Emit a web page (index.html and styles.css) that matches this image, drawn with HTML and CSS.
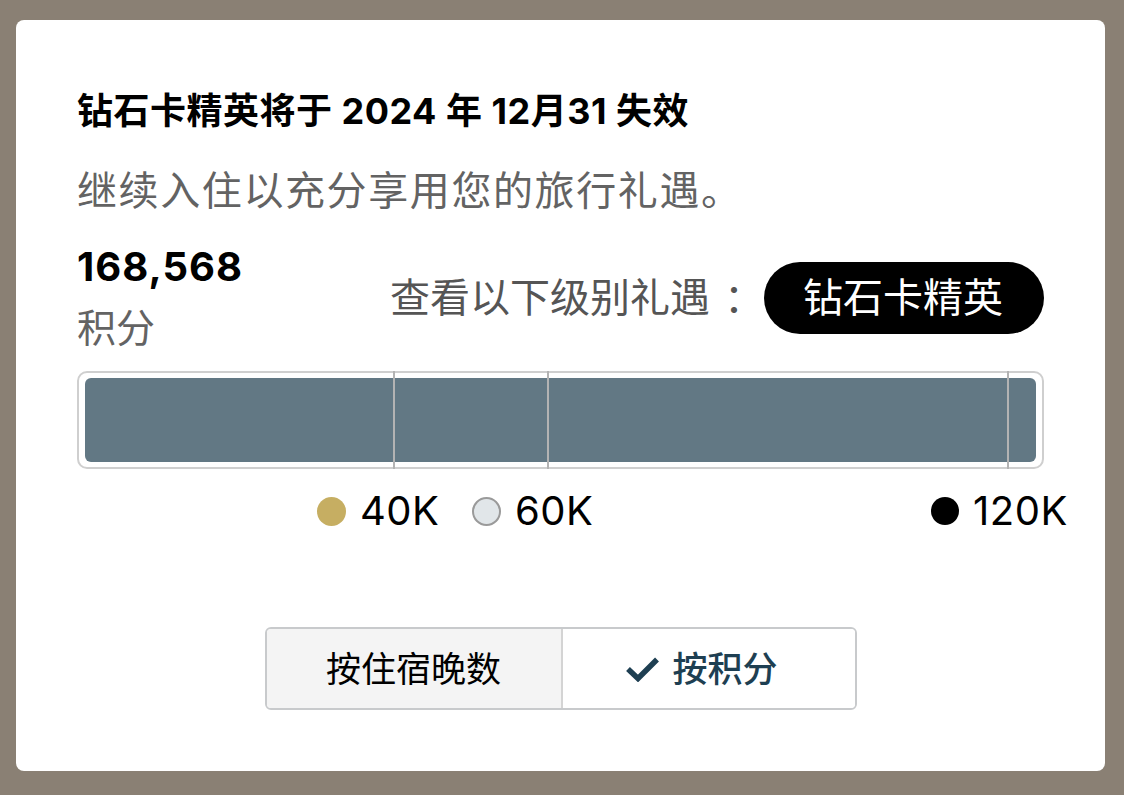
FILE: index.html
```html
<!DOCTYPE html>
<html lang="zh-CN">
<head>
    <meta charset="UTF-8">
    <meta name="viewport" content="width=device-width, initial-scale=1.0">
    <title>会员积分</title>
    <link rel="stylesheet" href="styles.css">
</head>
<body>
    <div class="card">
        <h1 class="title">钻石卡精英将于 2024 年 12月31 失效</h1>
        <p class="subtitle">继续入住以充分享用您的旅行礼遇。</p>

        <div class="summary">
            <div class="points">
                <div class="points-value">168,568</div>
                <div class="points-label">积分</div>
            </div>
            <div class="tier-view">
                <span class="tier-label">查看以下级别礼遇<span class="colon">：</span></span>
                <span class="tier-pill">钻石卡精英</span>
            </div>
        </div>

        <div class="bar">
            <div class="bar-fill"></div>
            <span class="tick" style="left: 314px"></span>
            <span class="tick" style="left: 468px"></span>
            <span class="tick" style="left: 928px"></span>
        </div>

        <div class="legend">
            <div class="legend-item" style="left: 240px"><span class="dot dot-gold"></span>40K</div>
            <div class="legend-item" style="left: 395px"><span class="dot dot-silver"></span>60K</div>
            <div class="legend-item" style="left: 854px"><span class="dot dot-black"></span>120K</div>
        </div>

        <div class="toggle">
            <button type="button" class="toggle-btn">按住宿晚数</button>
            <button type="button" class="toggle-btn active">
                <svg class="check" width="35" height="26" viewBox="0 0 35 26">
                    <path d="M3 13 L13 22.5 L32 3.5" fill="none" stroke="currentColor" stroke-width="5.5"/>
                </svg>
                按积分
            </button>
        </div>
    </div>
</body>
</html>
```

FILE: styles.css
```css
body {
    margin: 0;
    padding: 20px 0 0 16px;
    background: #8a8074;
    font-family: Inter, "Noto Sans CJK SC", sans-serif;
    color: #000;
}

.card {
    width: 1089px;
    box-sizing: border-box;
    background: #fff;
    border-radius: 8px;
    padding: 70px 61px 61px;
}

.title {
    margin: 0;
    font-size: 36px;
    line-height: 42px;
    font-weight: 700;
    letter-spacing: 0.5px;
}

.subtitle {
    margin: 35px 0 0;
    font-size: 40px;
    line-height: 48px;
    letter-spacing: 1.6px;
    color: #636363;
}

.summary {
    display: flex;
    justify-content: space-between;
    align-items: center;
    margin-top: 28px;
}

.points-value {
    font-size: 40px;
    line-height: 48px;
    font-weight: 700;
    letter-spacing: 1px;
}

.points-label {
    margin-top: 13px;
    font-size: 39px;
    line-height: 48px;
    color: #636363;
}

.tier-view {
    display: flex;
    align-items: center;
}

.tier-label {
    font-size: 40px;
    line-height: 48px;
    color: #555;
}

.tier-label .colon {
    margin-left: 14px;
}

.tier-pill {
    display: flex;
    align-items: center;
    height: 72px;
    padding: 0 41px 0 39px;
    border-radius: 36px;
    background: #000;
    color: #fff;
    font-size: 40px;
    line-height: 48px;
}

.bar {
    position: relative;
    margin-top: 19px;
    height: 98px;
    box-sizing: border-box;
    border: 2px solid #cfcfcf;
    border-radius: 10px;
    padding: 5px 6px;
}

.bar-fill {
    height: 84px;
    border-radius: 6px;
    background: #627884;
}

.tick {
    position: absolute;
    top: -2px;
    bottom: -2px;
    width: 1.5px;
    background: #b3b3b3;
}

.legend {
    position: relative;
    margin-top: 18px;
    height: 48px;
}

.legend-item {
    position: absolute;
    top: 0;
    display: flex;
    align-items: center;
    gap: 14px;
    font-size: 40px;
    line-height: 48px;
    letter-spacing: 0.5px;
}

.dot {
    width: 29px;
    height: 29px;
    box-sizing: border-box;
    border-radius: 50%;
}

.dot-gold {
    background: #c6ae62;
}

.dot-silver {
    background: #e1e6e9;
    border: 2px solid #9a9a9a;
}

.dot-black {
    width: 28px;
    height: 28px;
    background: #000;
}

.toggle {
    display: grid;
    grid-template-columns: 1fr 1fr;
    width: 592px;
    height: 83px;
    box-sizing: border-box;
    margin: 92px auto 0;
    border: 2px solid #c8cacc;
    border-radius: 6px;
    overflow: hidden;
}

.toggle-btn {
    display: flex;
    align-items: center;
    justify-content: center;
    gap: 12px;
    border: none;
    padding: 0;
    font-family: inherit;
    font-size: 35px;
    line-height: 42px;
    background: #f4f4f4;
    color: #000;
    cursor: pointer;
}

.toggle-btn + .toggle-btn {
    border-left: 2px solid #d4d4d4;
}

.toggle-btn.active {
    padding-right: 14px;
    background: #fff;
    color: #1e3f52;
    font-weight: 500;
}

.check {
    flex: none;
}
```
